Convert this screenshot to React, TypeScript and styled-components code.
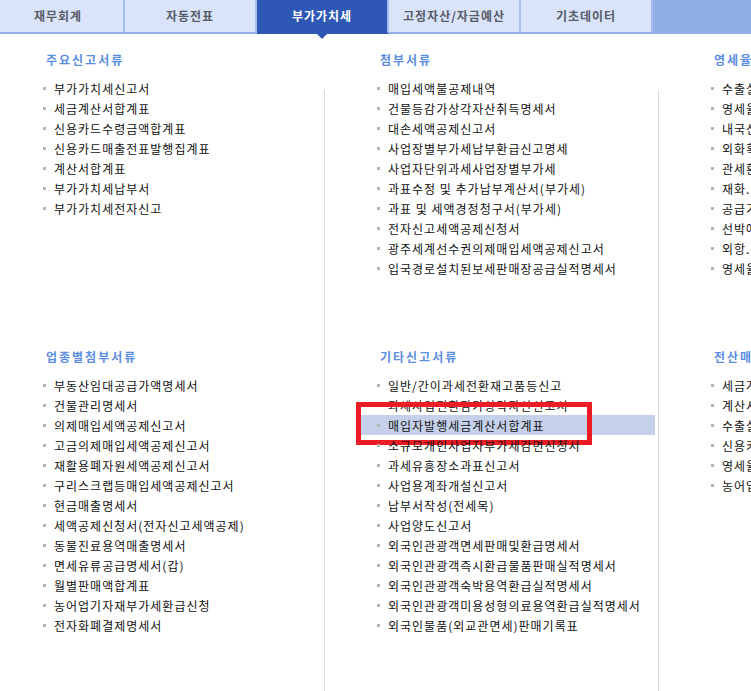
import styled, { createGlobalStyle } from "styled-components";

const GlobalStyle = createGlobalStyle`
  html, body {
    margin: 0;
    padding: 0;
    background: #fff;
    overflow: hidden;
  }
  body {
    font-family: "Noto Sans CJK KR", "Noto Sans", sans-serif;
  }
`;

type Section = { title: string; items: string[]; selected?: string };

const tabs = ["재무회계", "자동전표", "부가가치세", "고정자산/자금예산", "기초데이터"];
const activeTab = "부가가치세";

const columns: Section[][] = [
  [
    {
      title: "주요신고서류",
      items: [
        "부가가치세신고서",
        "세금계산서합계표",
        "신용카드수령금액합계표",
        "신용카드매출전표발행집계표",
        "계산서합계표",
        "부가가치세납부서",
        "부가가치세전자신고",
      ],
    },
    {
      title: "업종별첨부서류",
      items: [
        "부동산임대공급가액명세서",
        "건물관리명세서",
        "의제매입세액공제신고서",
        "고금의제매입세액공제신고서",
        "재활용폐자원세액공제신고서",
        "구리스크랩등매입세액공제신고서",
        "현금매출명세서",
        "세액공제신청서(전자신고세액공제)",
        "동물진료용역매출명세서",
        "면세유류공급명세서(갑)",
        "월별판매액합계표",
        "농어업기자재부가세환급신청",
        "전자화폐결제명세서",
      ],
    },
  ],
  [
    {
      title: "첨부서류",
      items: [
        "매입세액불공제내역",
        "건물등감가상각자산취득명세서",
        "대손세액공제신고서",
        "사업장별부가세납부환급신고명세",
        "사업자단위과세사업장별부가세",
        "과표수정 및 추가납부계산서(부가세)",
        "과표 및 세액경정청구서(부가세)",
        "전자신고세액공제신청서",
        "광주세계선수권의제매입세액공제신고서",
        "입국경로설치된보세판매장공급실적명세서",
      ],
    },
    {
      title: "기타신고서류",
      selected: "매입자발행세금계산서합계표",
      items: [
        "일반/간이과세전환재고품등신고",
        "과세사업전환감가상각자산신고서",
        "매입자발행세금계산서합계표",
        "소규모개인사업자부가세감면신청서",
        "과세유흥장소과표신고서",
        "사업용계좌개설신고서",
        "납부서작성(전세목)",
        "사업양도신고서",
        "외국인관광객면세판매및환급명세서",
        "외국인관광객즉시환급물품판매실적명세서",
        "외국인관광객숙박용역환급실적명세서",
        "외국인관광객미용성형의료용역환급실적명세서",
        "외국인물품(외교관면세)판매기록표",
      ],
    },
  ],
  [
    {
      title: "영세율첨부서류",
      items: [
        "수출실적명세서",
        "영세율매출명세서",
        "내국신용장·구매확인서전자발급명세서",
        "외화획득명세서",
        "관세환급금등명세서",
        "재화.용역공급기록표",
        "공급가액확정명세서",
        "선박에의한운송용역공급가액일람표",
        "외항.원양어선공급명세서",
        "영세율첨부서류제출명세서",
      ],
    },
    {
      title: "전산매체제출",
      items: [
        "세금계산서합계표",
        "계산서합계표",
        "수출실적명세서",
        "신용카드매출전표등수령명세서",
        "영세율매출명세서",
        "농어업기자재부가세환급신청",
      ],
    },
  ],
];

export default function App() {
  return (
    <>
      <GlobalStyle />
      <Page>
        <TabBar>
          {tabs.map((t) => (
            <Tab key={t} $active={t === activeTab}>
              {t}
            </Tab>
          ))}
          <TabFiller />
        </TabBar>

        <Grid>
          {columns.map((sections, ci) => (
            <Column key={ci}>
              {sections.map((s) => (
                <SectionBox key={s.title}>
                  <Heading>{s.title}</Heading>
                  <List>
                    {s.items.map((item) => (
                      <Item key={item} $selected={item === s.selected}>
                        {item}
                        {item === s.selected && <Marker />}
                      </Item>
                    ))}
                  </List>
                </SectionBox>
              ))}
            </Column>
          ))}
        </Grid>
      </Page>
    </>
  );
}

const Page = styled.div`
  width: 751px;
  min-height: 100vh;
  overflow: hidden;
`;

const TabBar = styled.div`
  display: flex;
  height: 34px;
  margin-left: -7px;
`;

const Tab = styled.div<{ $active?: boolean }>`
  position: relative;
  flex: 0 0 132px;
  height: 34px;
  padding-bottom: 2px;
  box-sizing: border-box;
  display: flex;
  align-items: center;
  justify-content: center;
  font-size: 12px;
  font-weight: bold;
  letter-spacing: 1px;
  color: ${({ $active }) => ($active ? "#fff" : "#565b68")};
  background: ${({ $active }) => ($active ? "#2f58b6" : "#d9e3f9")};
  border-right: 2px solid #a6bbee;
  border-bottom: 2px solid ${({ $active }) => ($active ? "#2f58b6" : "#93aee6")};

  &::after {
    content: "";
    display: ${({ $active }) => ($active ? "block" : "none")};
    position: absolute;
    left: 50%;
    bottom: -7px;
    margin-left: -5px;
    border-left: 5px solid transparent;
    border-right: 5px solid transparent;
    border-top: 5px solid #2f58b6;
  }
`;

const TabFiller = styled.div`
  flex: 1;
  background: #91ade6;
`;

const Grid = styled.div`
  display: grid;
  grid-template-columns: repeat(3, 334px);
  margin-left: -9px;
  min-height: calc(100vh - 34px);
`;

const Column = styled.div`
  display: flex;
  flex-direction: column;
  background: linear-gradient(#dcdcdc, #dcdcdc) no-repeat;
  background-size: 1px 100%;
  background-position: right 0 top 56px;
`;

const SectionBox = styled.section`
  box-sizing: border-box;
  height: 297px;
  padding-top: 18px;
`;

const Heading = styled.h3`
  margin: 0;
  padding-left: 55px;
  font-size: 12px;
  line-height: 16px;
  font-weight: bold;
  letter-spacing: 2px;
  color: #5b8ee0;
  white-space: nowrap;
`;

const List = styled.ul`
  list-style: none;
  margin: 10px 4px 0 35px;
  padding: 0;
`;

const Item = styled.li<{ $selected?: boolean }>`
  position: relative;
  display: flex;
  align-items: center;
  height: 20px;
  padding-left: 17px;
  font-size: 12px;
  letter-spacing: 1px;
  color: #111;
  white-space: nowrap;
  background: ${({ $selected }) => ($selected ? "#c5d1ea" : "transparent")};

  &::before {
    content: "";
    flex: 0 0 3px;
    height: 3px;
    margin-right: 8px;
    background: #b4b4b4;
  }
`;

const Marker = styled.span`
  position: absolute;
  left: -4px;
  top: -13px;
  width: 236px;
  height: 43px;
  box-sizing: border-box;
  border: 5px solid #ec1c24;
`;
